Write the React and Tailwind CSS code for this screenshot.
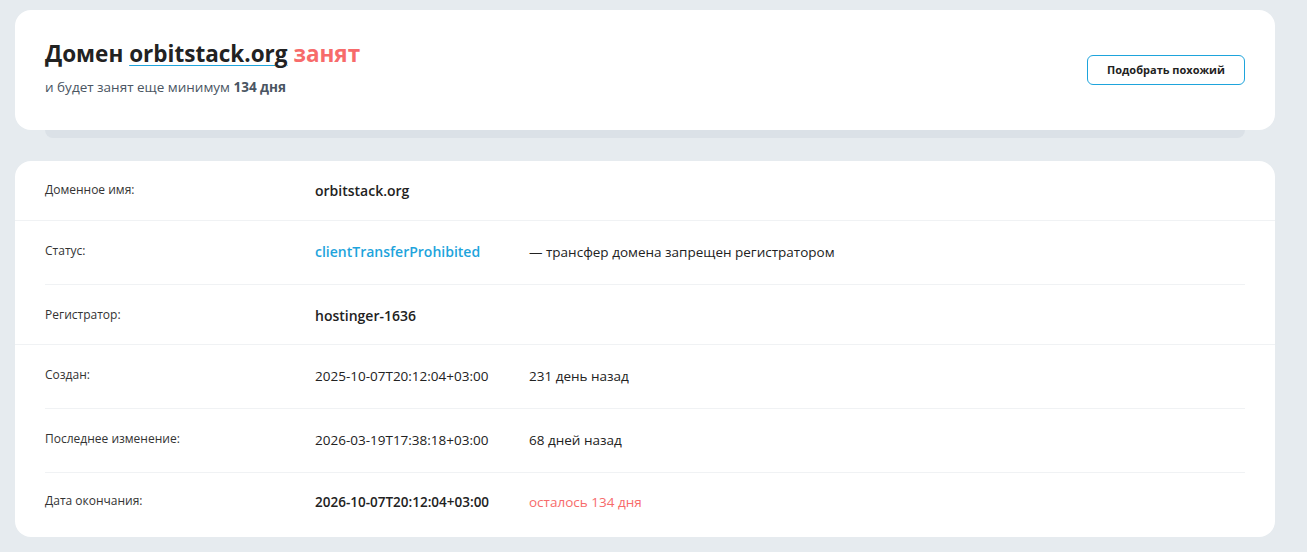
import React from 'react';

const rows = [
  { label: 'Доменное имя:', value: 'orbitstack.org', bold: true, big: true, h: 'h-[59px] pt-[21px]', line: 'full' },
  { label: 'Статус:', value: 'clientTransferProhibited', link: true, big: true, note: '— трансфер домена запрещен регистратором', h: 'h-[64px] pt-[22px]', line: 'inset' },
  { label: 'Регистратор:', value: 'hostinger-1636', bold: true, big: true, h: 'h-[59px] pt-[22px]', line: 'full' },
  { label: 'Создан:', value: '2025-10-07T20:12:04+03:00', note: '231 день назад', h: 'h-[64px] pt-[22px]', line: 'inset' },
  { label: 'Последнее изменение:', value: '2026-03-19T17:38:18+03:00', note: '68 дней назад', h: 'h-[64px] pt-[22px]', line: 'inset' },
  { label: 'Дата окончания:', value: '2026-10-07T20:12:04+03:00', bold: true, note: 'осталось 134 дня', red: true, h: 'h-[64px] pt-[20px]', line: 'none' },
];

function Row({ row }) {
  return (
    <div className={row.line === 'full' ? 'border-b border-[#f0f2f4]' : ''}>
      <div className={`${row.h} mx-[30px] flex items-start leading-[18px] ${row.line === 'inset' ? 'border-b border-[#f0f2f4]' : ''}`}>
        <div className="w-[270px] text-[12px] text-[#333] -mt-[1px]">{row.label}</div>
        <div
          className={`w-[214px] ${row.big ? 'text-[14px]' : 'text-[13.5px]'} ${row.bold || row.link ? 'font-semibold' : ''} ${row.link ? 'text-[#1ea4dc]' : 'text-[#222]'}`}
        >
          {row.value}
        </div>
        {row.note && (
          <div className={`text-[13.5px] ${row.red ? 'text-[#f76b6b]' : 'text-[#222]'}`}>{row.note}</div>
        )}
      </div>
    </div>
  );
}

export default function App() {
  return (
    <div className="min-h-screen bg-[#e6ebef] pl-[15px] pr-[32px] pt-[10px] pb-[15px] font-['Open_Sans',sans-serif]">
      <div className="bg-white rounded-2xl h-[120px] px-[30px] flex items-center justify-between">
        <div className="-mt-[4px]">
          <h1 className="text-[22.5px] font-bold text-[#222] leading-[32px]">
            Домен{' '}
            <span className="underline decoration-[#1ea4dc] decoration-1 underline-offset-[3px]">orbitstack.org</span>{' '}
            <span className="text-[#f76b6b]">занят</span>
          </h1>
          <p className="mt-[7px] text-[13.5px] text-[#4a5562]">
            и будет занят еще минимум <span className="font-bold">134 дня</span>
          </p>
        </div>
        <button className="w-[158px] h-[30px] rounded-md border border-[#1ea4dc] text-[11px] font-bold text-[#222] bg-white">
          Подобрать похожий
        </button>
      </div>
      <div className="mx-[30px] h-[8px] bg-[#dbe1e7] rounded-b-lg" />

      <div className="mt-[23px] bg-white rounded-2xl overflow-hidden">
        {rows.map((r) => (
          <Row key={r.label} row={r} />
        ))}
      </div>
    </div>
  );
}
